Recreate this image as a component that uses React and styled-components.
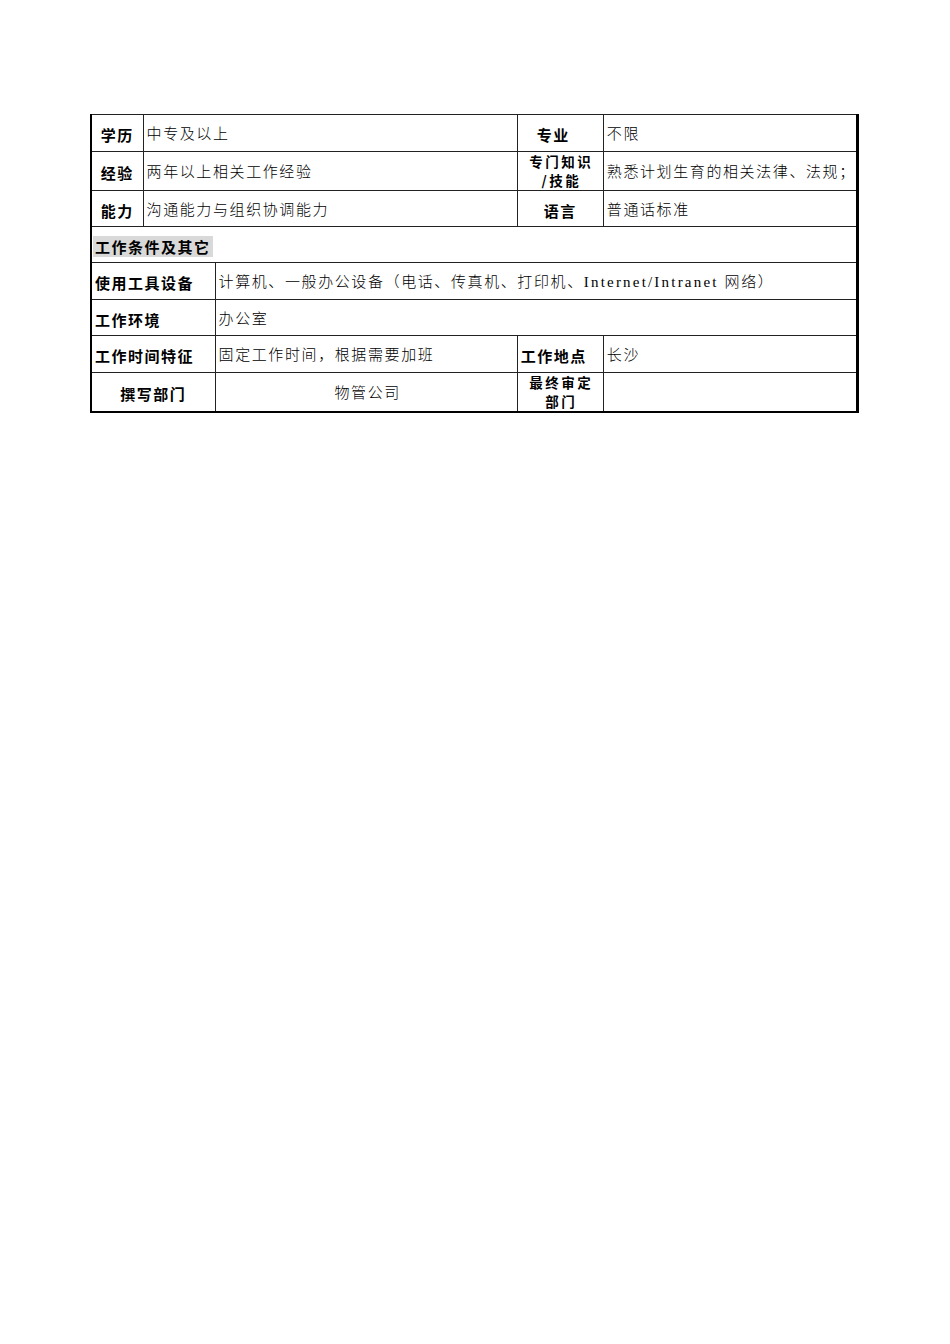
import React from "react";
import styled, { createGlobalStyle } from "styled-components";

const GlobalStyle = createGlobalStyle`
	body {
		margin: 0;
		background: #fff;
		color: #000;
	}
`;

const Page = styled.div`
	width: 950px;
	min-height: 1344px;
	padding: 114px 0 0 90px;
	box-sizing: border-box;
`;

const Sheet = styled.table`
	width: 769px;
	table-layout: fixed;
	border-collapse: collapse;
	border-top: 1px solid #000;
	border-left: 2px solid #000;
	border-right: 3px solid #000;
	border-bottom: 2px solid #000;
`;

const Row = styled.tr`
	height: ${(p) => p.$h}px;
`;

const Label = styled.td`
	border: 1px solid #222;
	padding: ${(p) => (p.$wrap ? "0" : p.$left ? "4px 0 0 3px" : "4px 0 0 0")};
	padding-right: ${(p) => p.$nudge || 0}px;
	text-align: ${(p) => (p.$left ? "left" : "center")};
	vertical-align: middle;
	font-family: "Noto Sans CJK SC", "Liberation Sans", sans-serif;
	font-weight: 700;
	font-size: 15px;
	letter-spacing: 1.5px;
	line-height: 18px;
	white-space: nowrap;
	overflow: hidden;
`;

const LabelLine = styled.div`
	font-size: 13.5px;
	letter-spacing: 2.5px;
	line-height: 19px;
	margin-left: 2px;
`;

const Value = styled.td`
	border: 1px solid #222;
	padding: 2px 0 0 3px;
	text-align: ${(p) => (p.$center ? "center" : "left")};
	vertical-align: middle;
	font-family: "Liberation Serif", "Noto Sans CJK SC", serif;
	font-weight: 300;
	font-size: 15px;
	letter-spacing: 1.6px;
	line-height: 18px;
	white-space: nowrap;
	overflow: hidden;
`;

const Section = styled.td`
	border: 1px solid #222;
	padding: 4px 0 0 1px;
	vertical-align: middle;
`;

const SectionTitle = styled.span`
	display: inline-block;
	background: #d9d9d9;
	padding: 1px 2px 1px 2px;
	font-family: "Noto Sans CJK SC", "Liberation Sans", sans-serif;
	font-weight: 700;
	font-size: 15px;
	letter-spacing: 1.5px;
	line-height: 19px;
`;

const Latin = styled.span`
	font-family: "Liberation Serif", serif;
	font-size: 15px;
	letter-spacing: 2.2px;
`;

export default function App() {
	return (
		<Page>
			<GlobalStyle />
			<Sheet>
				<colgroup>
					<col style={{ width: 52 }} />
					<col style={{ width: 72 }} />
					<col style={{ width: 302 }} />
					<col style={{ width: 86 }} />
					<col style={{ width: 254 }} />
				</colgroup>
				<tbody>
					<Row $h={37}>
						<Label>学历</Label>
						<Value colSpan={2}>中专及以上</Value>
						<Label $nudge={14}>专业</Label>
						<Value>不限</Value>
					</Row>
					<Row $h={39}>
						<Label>经验</Label>
						<Value colSpan={2}>两年以上相关工作经验</Value>
						<Label $wrap>
							<LabelLine>专门知识</LabelLine>
							<LabelLine>/技能</LabelLine>
						</Label>
						<Value>熟悉计划生育的相关法律、法规；</Value>
					</Row>
					<Row $h={36}>
						<Label>能力</Label>
						<Value colSpan={2}>沟通能力与组织协调能力</Value>
						<Label>语言</Label>
						<Value>普通话标准</Value>
					</Row>
					<Row $h={36}>
						<Section colSpan={5}>
							<SectionTitle>工作条件及其它</SectionTitle>
						</Section>
					</Row>
					<Row $h={37}>
						<Label $left colSpan={2}>使用工具设备</Label>
						<Value colSpan={3}>
							计算机、一般办公设备（电话、传真机、打印机、<Latin>Internet/Intranet </Latin>网络）
						</Value>
					</Row>
					<Row $h={36}>
						<Label $left colSpan={2}>工作环境</Label>
						<Value colSpan={3}>办公室</Value>
					</Row>
					<Row $h={37}>
						<Label $left colSpan={2}>工作时间特征</Label>
						<Value>固定工作时间，根据需要加班</Value>
						<Label $left>工作地点</Label>
						<Value>长沙</Value>
					</Row>
					<Row $h={39}>
						<Label colSpan={2}>撰写部门</Label>
						<Value $center>物管公司</Value>
						<Label $wrap>
							<LabelLine>最终审定</LabelLine>
							<LabelLine>部门</LabelLine>
						</Label>
						<Value />
					</Row>
				</tbody>
			</Sheet>
		</Page>
	);
}
